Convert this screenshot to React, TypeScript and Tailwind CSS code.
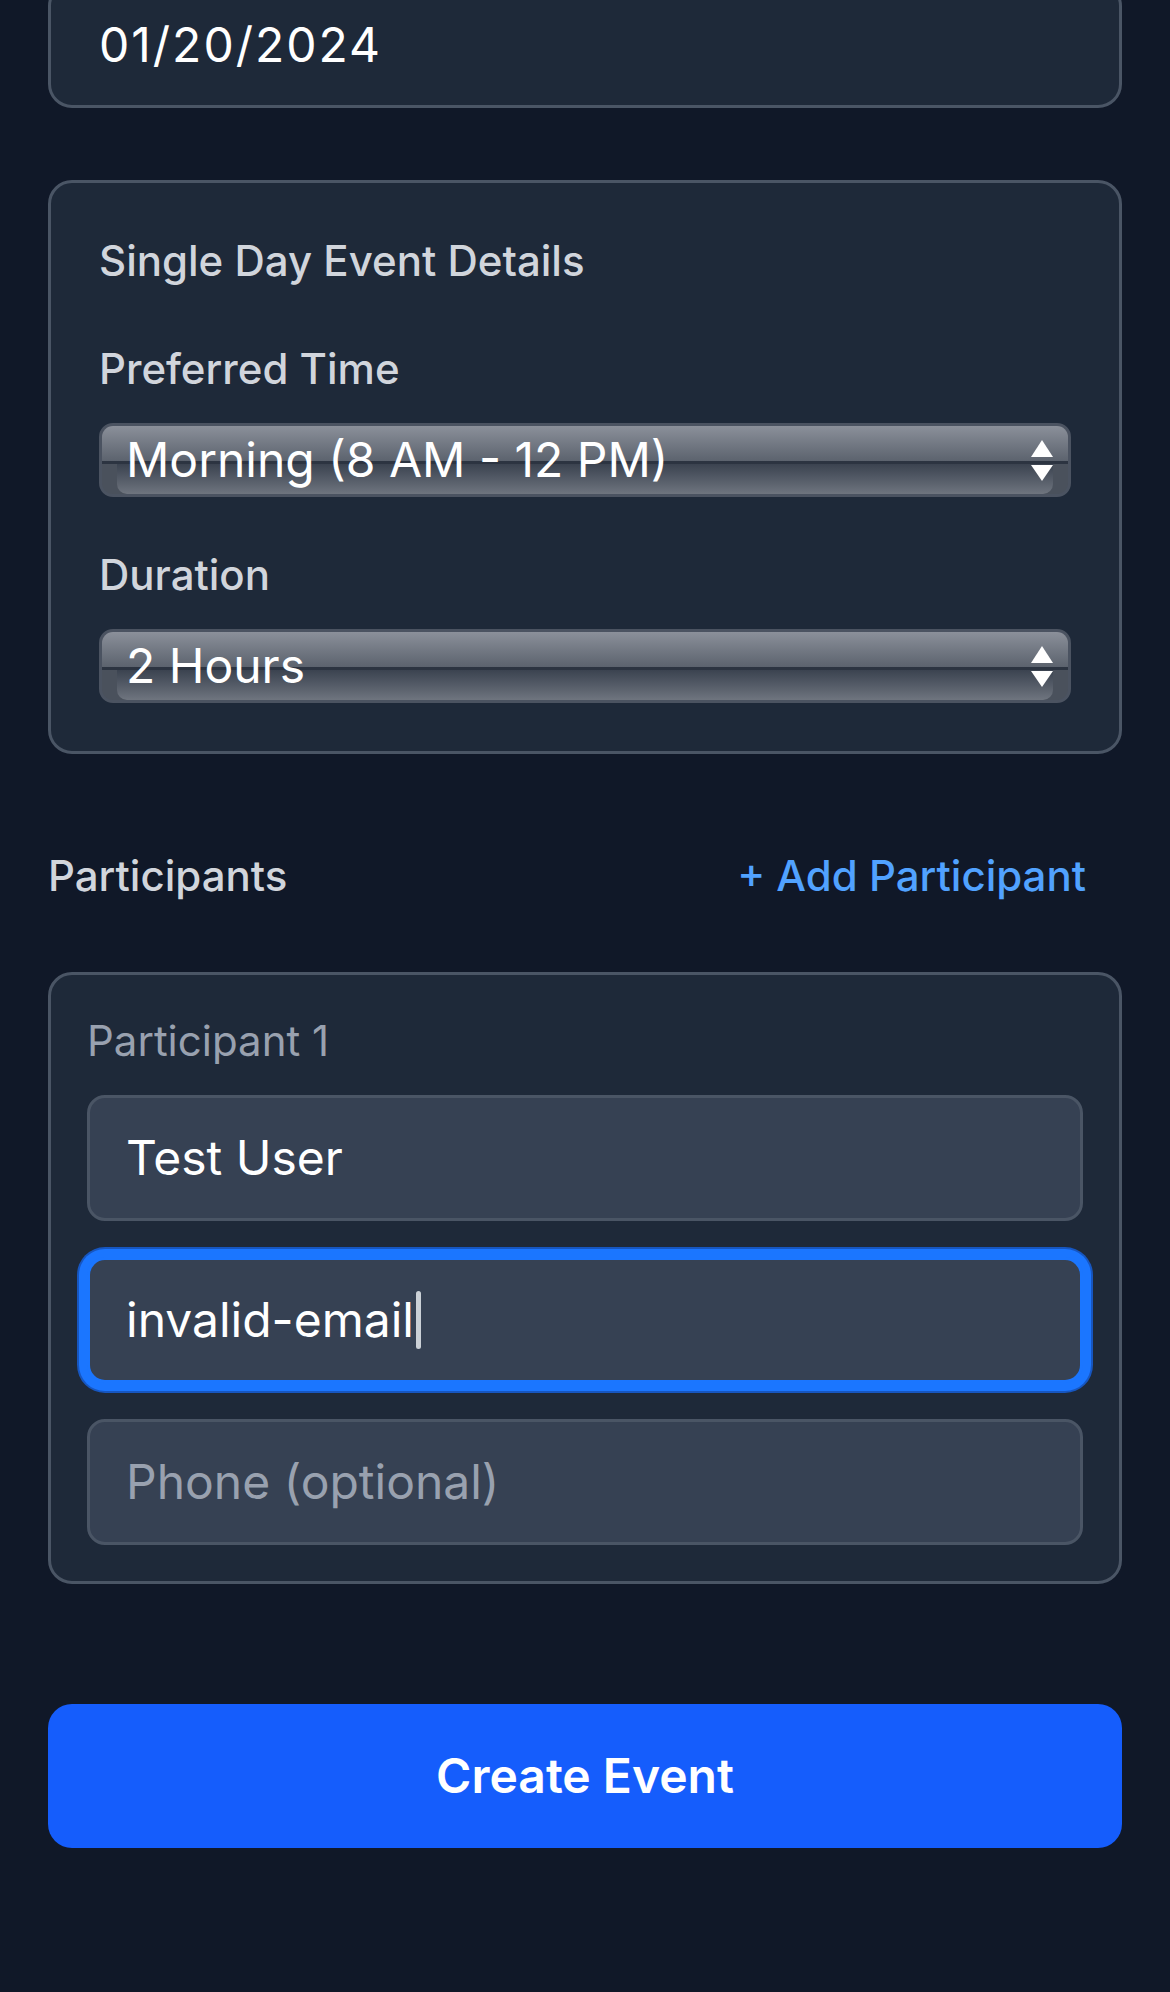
import React from 'react'

function FakeSelect({ value }: { value: string }) {
  return (
    <div className="relative h-[74px] rounded-[14px] border-[3px] border-[#4b5361] bg-[#4a515c]">
      <div className="flex h-full flex-col">
        <div className="h-[35px] rounded-t-[11px] bg-linear-to-b from-[#8b909a] to-[#5c636e]" />
        <div className="h-[3px] bg-[#2c3441]" />
        <div className="mx-[15px] flex-1 rounded-b-[10px] bg-linear-to-b from-[#3b4350] to-[#6f757f]" />
      </div>
      <div className="absolute inset-0 flex items-center justify-between pl-[24px] pr-[15px]">
        <span className="text-[48px] leading-none text-white">{value}</span>
        <svg width="22" height="41" viewBox="0 0 22 41" fill="#ffffff">
          <polygon points="11,0 22,17 0,17" />
          <polygon points="0,25 22,25 11,41" />
        </svg>
      </div>
    </div>
  )
}

function Field({ children, focused }: { children: React.ReactNode; focused?: boolean }) {
  return (
    <div
      className={
        focused
          ? 'flex h-[126px] items-center rounded-[18px] border-[3px] border-[#1b76ff] bg-[#364153] px-[36px] shadow-[0_0_0_8px_#1b76ff,0_0_0_10px_#1756c0]'
          : 'flex h-[126px] items-center rounded-[18px] border-[3px] border-[#4a5565] bg-[#364153] px-[36px]'
      }
    >
      {children}
    </div>
  )
}

export default function App() {
  return (
    <div className="flex min-h-screen flex-col bg-[#101828] px-12 font-['Inter','Noto_Sans',sans-serif]">
      {/* date input, top is scrolled out of view */}
      <div className="-mt-[18px] flex h-[126px] items-center rounded-[24px] border-[3px] border-[#4a5565] bg-[#1e2939] px-[48px]">
        <span className="text-[48px] tracking-[2px] text-white">01/20/2024</span>
      </div>

      <div className="mt-[72px] rounded-[24px] border-[3px] border-[#4a5565] bg-[#1e2939] p-12">
        <h3 className="text-[42px] leading-[60px] font-medium text-[#d1d5dc]">Single Day Event Details</h3>
        <div className="mt-12">
          <label className="mb-6 block text-[42px] leading-[60px] font-medium text-[#d1d5dc]">Preferred Time</label>
          <FakeSelect value="Morning (8 AM - 12 PM)" />
        </div>
        <div className="mt-12">
          <label className="mb-6 block text-[42px] leading-[60px] font-medium text-[#d1d5dc]">Duration</label>
          <FakeSelect value="2 Hours" />
        </div>
      </div>

      <div className="mt-[74px] flex items-center justify-between">
        <span className="text-[42px] leading-[60px] font-medium text-[#d1d5dc]">Participants</span>
        <button className="px-9 py-[18px] text-[42px] leading-[60px] font-medium text-[#51a2ff]">+ Add Participant</button>
      </div>

      <div className="mt-12 rounded-[24px] border-[3px] border-[#4a5565] bg-[#1e2939] p-9">
        <div className="mb-6 text-[42px] leading-[60px] text-[#99a1af]">Participant 1</div>
        <div className="flex flex-col gap-9">
          <Field>
            <span className="text-[48px] leading-[72px] text-white">Test User</span>
          </Field>
          <Field focused>
            <span className="text-[48px] leading-[72px] text-white">invalid-email</span>
            <span className="ml-[2px] h-[58px] w-[5px] rounded-full bg-[#cbd0d6]" />
          </Field>
          <Field>
            <span className="text-[48px] leading-[72px] text-[#99a1af]">Phone (optional)</span>
          </Field>
        </div>
      </div>

      <button className="mt-30 h-[144px] rounded-[24px] bg-[#155dfc] text-[48px] font-semibold text-white">
        Create Event
      </button>
    </div>
  )
}
